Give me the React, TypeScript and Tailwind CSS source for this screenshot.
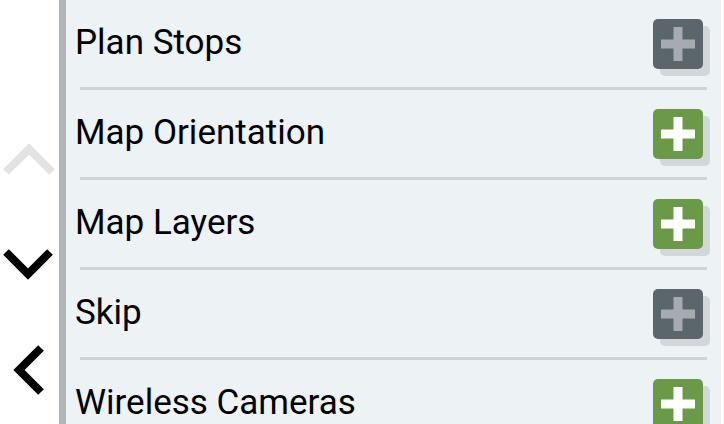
const items = [
    { label: "Plan Stops", enabled: false },
    { label: "Map Orientation", enabled: true },
    { label: "Map Layers", enabled: true },
    { label: "Skip", enabled: false },
    { label: "Wireless Cameras", enabled: true },
];

function PlusButton({ enabled }: { enabled: boolean }) {
    return (
        <div
            className={
                enabled
                    ? "w-[50px] h-[50px] rounded-[5px] bg-[#6a9a47] shadow-[7px_7px_0_#d3d7da] flex items-center justify-center"
                    : "w-[50px] h-[50px] rounded-[5px] bg-[#5a666c] shadow-[7px_7px_0_#d3d7da] flex items-center justify-center"
            }
        >
            <svg width="34" height="34" viewBox="0 0 34 34">
                <rect x="0" y="12.5" width="34" height="9" fill={enabled ? "#ffffff" : "#a5abae"} />
                <rect x="12.5" y="0" width="9" height="34" fill={enabled ? "#ffffff" : "#a5abae"} />
            </svg>
        </div>
    );
}

function Chevron({ points, color, height }: { points: string; color: string; height: number }) {
    return (
        <svg width="59" height={height} viewBox={`0 0 59 ${height}`} className="block shrink-0">
            <polyline points={points} fill="none" stroke={color} strokeWidth="8" strokeLinejoin="miter" />
        </svg>
    );
}

export default function App() {
    return (
        <div className="w-[724px] h-[424px] overflow-hidden bg-white flex font-['Roboto',sans-serif]">
            {/* scroll / back arrows */}
            <div className="w-[59px] shrink-0 flex flex-col pt-[130px]">
                <Chevron points="6,42 29,19 52,42" color="#e3e3e3" height={60} />
                <div className="h-[45px] shrink-0" />
                <Chevron points="6,17 28,39 50,17" color="#000000" height={60} />
                <div className="h-[40px] shrink-0" />
                <Chevron points="41,13 19,35 41,57" color="#000000" height={70} />
            </div>
            <div className="w-[7px] shrink-0 bg-[#b1b5b8]" />
            <div className="w-[655px] shrink-0 bg-[#edf2f5] flex flex-col">
                {items.map((item, i) => (
                    <div key={item.label}>
                        {i > 0 && <div className="h-[3px] mx-[14px] bg-[#cfd3d6]" />}
                        <div className="h-[87px] flex items-center justify-between pl-[9px] pr-[18px]">
                            <span className="text-[35px] text-black leading-normal">{item.label}</span>
                            <PlusButton enabled={item.enabled} />
                        </div>
                    </div>
                ))}
            </div>
        </div>
    );
}
